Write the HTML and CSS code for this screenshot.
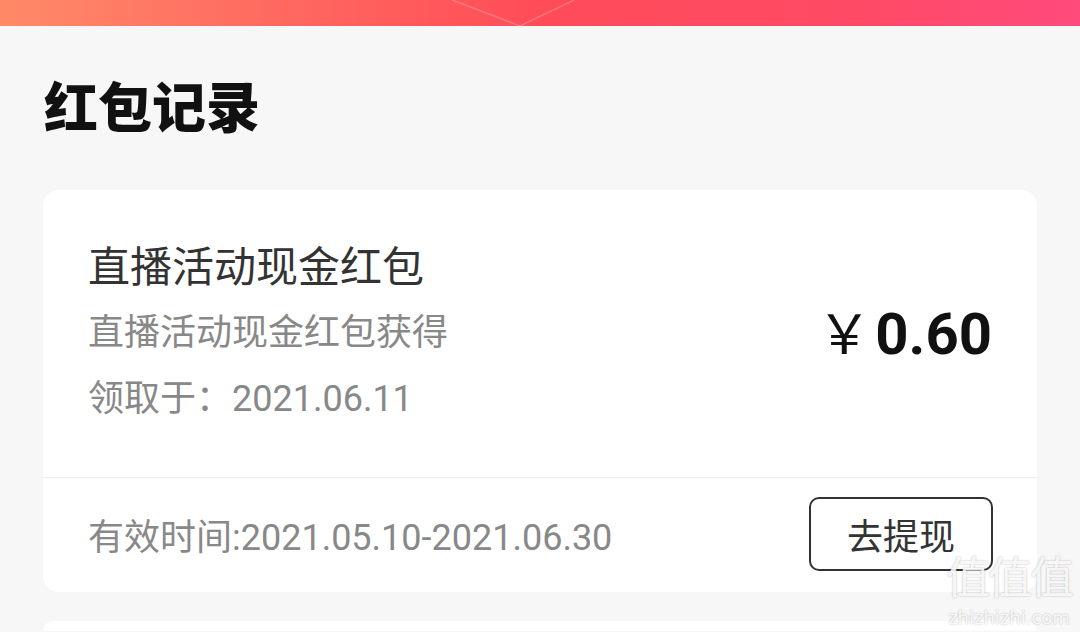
FILE: index.html
```html
<!DOCTYPE html>
<html>

<head>
    <title>红包记录</title>
    <link rel="stylesheet" href="styles.css">
</head>

<body>
    <div class="top_bar">
        <svg class="top_deco" width="124" height="26" viewBox="0 0 124 26">
            <path d="M0 0 L68 26 L122 0" fill="none" stroke="rgba(255,255,255,0.22)" stroke-width="1.5"/>
        </svg>
    </div>

    <h1 class="page_title">红包记录</h1>

    <div class="card">
        <div class="card_main">
            <div class="card_info">
                <div class="card_name">直播活动现金红包</div>
                <div class="card_desc">直播活动现金红包获得</div>
                <div class="card_desc">领取于：2021.06.11</div>
            </div>
            <div class="amount"><span class="yen">￥</span>0.60</div>
        </div>
        <div class="card_foot">
            <div class="valid">有效时间:2021.05.10-2021.06.30</div>
            <button class="btn_withdraw">去提现</button>
        </div>
    </div>

    <div class="card card_next"></div>

    <div class="watermark">
        <div class="wm_big">值值值</div>
        <div class="wm_small">zhizhizhi.com</div>
    </div>
</body>

</html>
```

FILE: styles.css
```css
html {
    overflow: hidden;
}

body {
    margin: 0;
    width: 1080px;
    height: 632px;
    overflow: hidden;
    background-color: #f7f7f7;
    font-family: Roboto, "Noto Sans CJK SC", sans-serif;
    position: relative;
}

.top_bar {
    height: 26px;
    background: linear-gradient(90deg, #ff8a68 0%, #ff6a60 25%, #ff4c58 50%, #ff4a66 80%, #ff4a7c 100%);
    position: relative;
}

.top_deco {
    position: absolute;
    left: 452px;
    top: 0;
}

.page_title {
    margin: 0;
    padding: 44px 0 0 44px;
    height: 120px;
    box-sizing: border-box;
    font-family: "Noto Sans CJK SC", sans-serif;
    font-size: 54px;
    font-weight: 900;
    line-height: 70px;
    color: #111;
}

.card {
    margin: 44px 43px 0 43px;
    background: #fff;
    border-radius: 16px;
}

.card_main {
    display: flex;
    align-items: center;
    justify-content: space-between;
    padding: 46px 45px 53px 45px;
}

.card_name {
    font-family: "Noto Sans CJK SC", sans-serif;
    font-size: 42px;
    line-height: 56px;
    color: #333;
}

.card_desc {
    margin-top: 16px;
    font-size: 36px;
    line-height: 50px;
    color: #888;
}

.amount {
    font-family: Roboto, sans-serif;
    font-size: 58px;
    font-weight: 700;
    color: #111;
}

.yen {
    font-family: "Noto Sans CJK SC", sans-serif;
    font-weight: 400;
    font-size: 54px;
    margin-right: 4px;
}

.card_foot {
    height: 115px;
    border-top: 1px solid #eeeeee;
    display: flex;
    align-items: center;
    justify-content: space-between;
    padding: 0 44px 2px 45px;
    box-sizing: border-box;
}

.valid {
    font-size: 36px;
    color: #888;
}

.btn_withdraw {
    width: 184px;
    height: 74px;
    border: 2px solid #333;
    border-radius: 10px;
    background: #fff;
    font-family: "Noto Sans CJK SC", sans-serif;
    font-size: 36px;
    color: #333;
    padding: 0;
}

.card_next {
    margin-top: 29px;
    height: 10px;
    border-radius: 16px 16px 0 0;
}

.watermark {
    position: absolute;
    right: 8px;
    bottom: 4px;
    display: flex;
    flex-direction: column;
    align-items: center;
    color: rgba(255, 255, 255, 0.9);
    text-shadow: 0 0 2px rgba(0, 0, 0, 0.3);
}

.wm_big {
    font-family: "Noto Sans CJK SC", sans-serif;
    font-size: 44px;
    letter-spacing: -2px;
}

.wm_small {
    font-family: "DejaVu Sans", sans-serif;
    font-size: 18px;
}
```
